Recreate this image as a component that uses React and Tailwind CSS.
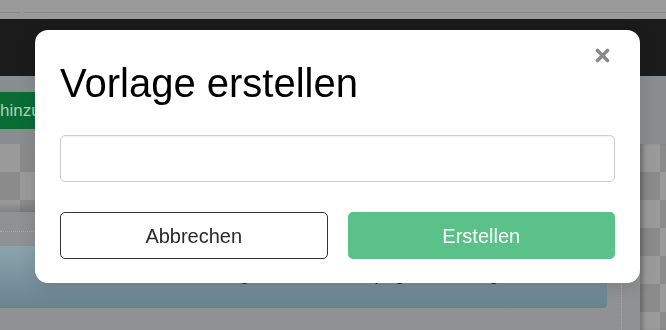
import { useState } from "react";

const checker =
  "bg-[repeating-conic-gradient(#8b8b8b_0_25%,#9a9a9a_0_50%)] bg-[length:40px_56px]";

const CreateTemplateModal = ({ onClose }) => {
  const [name, setName] = useState("");

  return (
    <div className="fixed inset-0 z-50">
      <div className="absolute left-[35px] top-[30px] w-[605px] rounded-[13px] bg-white px-[25px] pt-[31px] pb-[24px] shadow-[0_4px_18px_rgba(0,0,0,0.12)]">
        <button
          onClick={onClose}
          className="absolute right-[30px] top-[17px] flex h-[16px] w-[16px] items-center justify-center"
        >
          <svg width="15" height="15" viewBox="0 0 15 15">
            <path
              d="M2.5 2.5 L12.5 12.5 M12.5 2.5 L2.5 12.5"
              stroke="#8a8a8a"
              strokeWidth="3.6"
              strokeLinecap="round"
            />
          </svg>
        </button>

        <h2 className="text-[40px] leading-[45px] text-black">Vorlage erstellen</h2>

        <input
          value={name}
          onChange={(e) => setName(e.target.value)}
          className="mt-[29px] block h-[47px] w-full rounded-[5px] border border-[#cdcdcd] px-3 text-[18px] shadow-[inset_0_1px_2px_rgba(0,0,0,0.06)] outline-none"
        />

        <div className="mt-[30px] grid grid-cols-2 gap-[20px]">
          <button
            onClick={onClose}
            className="h-[47px] rounded-[5px] border border-[#333] bg-white text-[20px] text-[#2a2a2a]"
          >
            Abbrechen
          </button>
          <button className="h-[47px] rounded-[5px] bg-[#5ac189] text-[20px] text-white">
            Erstellen
          </button>
        </div>
      </div>
    </div>
  );
};

export default function App() {
  const [open, setOpen] = useState(true);

  return (
    <div className="relative h-[330px] w-[666px] overflow-hidden bg-[#8f9193] font-['Liberation_Sans',Arial,sans-serif]">
      {/* browser strip */}
      <div className="flex h-[19px] items-start bg-[#9a9a9a] pt-[12px]">
        <div className="h-px w-[20px] bg-[#878787]" />
        <div className="ml-[4px] h-px flex-1 bg-[#878787]" />
      </div>

      {/* app header */}
      <div className="h-[57px] bg-[#1b1b1b]" />

      <div className="flex">
        <div className="w-[640px]">
          {/* toolbar */}
          <div className="h-[68px] bg-[#8a8d8f] pt-[16px]">
            <button className="flex h-[37px] items-center whitespace-nowrap bg-[#0a6c35] pl-0 pr-3 text-[17px] text-[#b4cfbd]">
              hinzufügen
            </button>
          </div>

          {/* canvas preview */}
          <div className={`relative h-[68px] ${checker}`}>
            <div className="absolute inset-x-0 bottom-0 h-[10px] bg-gradient-to-b from-transparent to-[#6e6e6e]/60" />
          </div>

          <div className="h-[34px] pt-[19px]">
            <div className="border-t border-dotted border-[#a9abad]" />
          </div>

          <div className="flex">
            <div className="h-[62px] w-[607px] rounded-br-[4px] bg-gradient-to-b from-[#8da4ad] to-[#68838f] pt-[15px] text-center text-[18px] text-[#0d3942]">
              Noch keine Vorlage in dieser Kampagne hinterlegt
            </div>
            <div className="ml-[14px] h-[84px] border-l border-dotted border-[#a9abad]" />
          </div>
        </div>

        {/* right strip */}
        <div className="flex w-[26px] flex-col">
          <div className="h-[68px] bg-[#8a8d8f]" />
          <div className={`flex-1 ${checker} shadow-[inset_5px_0_4px_-2px_rgba(0,0,0,0.25)]`} />
        </div>
      </div>

      {open && <CreateTemplateModal onClose={() => setOpen(false)} />}
    </div>
  );
}
